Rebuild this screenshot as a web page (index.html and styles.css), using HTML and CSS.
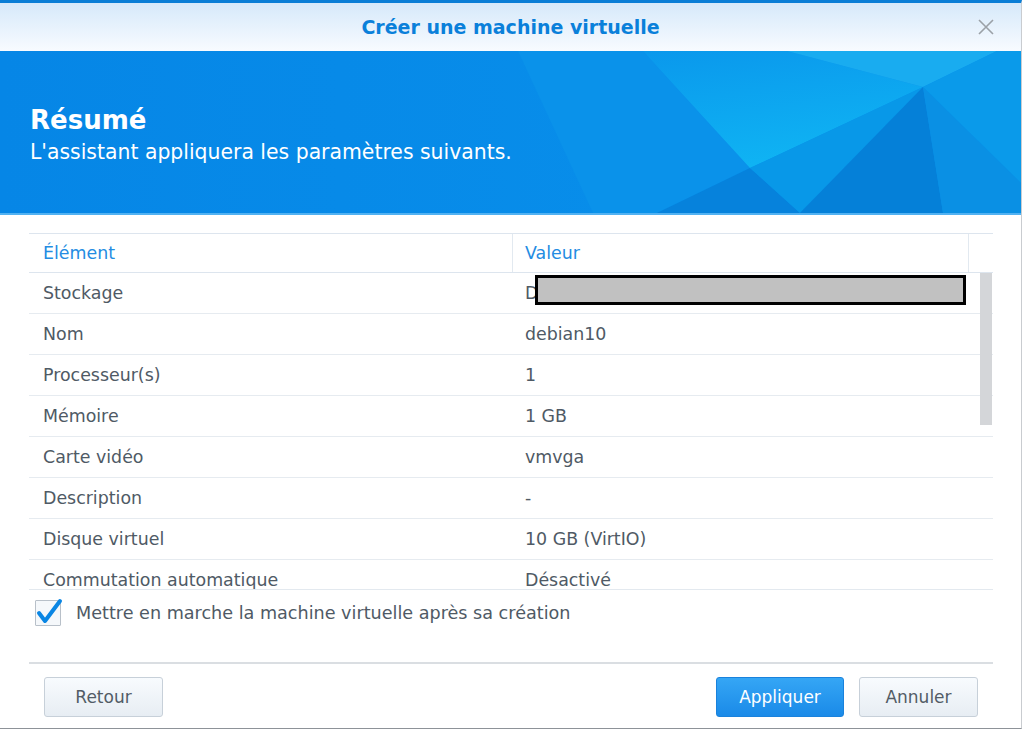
FILE: index.html
```html
<!DOCTYPE html>
<html>
<head>
    <title>Créer une machine virtuelle</title>
    <link rel="stylesheet" href="styles.css">
</head>
<body>
    <div class="dialog">
        <div class="titlebar">
            <span></span>
            <h1 class="title">Créer une machine virtuelle</h1>
            <svg class="close" width="18" height="18" viewBox="0 0 18 18">
                <path d="M2 2 L16 16 M16 2 L2 16" stroke="#9ba1a7" stroke-width="1.6" fill="none"/>
            </svg>
        </div>

        <div class="banner">
            <!-- decorative polygon background -->
            <svg class="banner-bg" viewBox="0 0 1021 162" preserveAspectRatio="none">
                <defs>
                    <linearGradient id="base" x1="0" y1="0" x2="1" y2="0">
                        <stop offset="0" stop-color="#0686e6"/>
                        <stop offset="1" stop-color="#0992ec"/>
                    </linearGradient>
                    <linearGradient id="mid" x1="0" y1="0" x2="0.3" y2="1">
                        <stop offset="0" stop-color="#0a98ec"/>
                        <stop offset="1" stop-color="#0fb3f3"/>
                    </linearGradient>
                </defs>
                <rect x="0" y="0" width="1021" height="162" fill="url(#base)"/>
                <polygon points="518,0 643,0 750,117 657,162 593,162" fill="#0a92ea"/>
                <polygon points="643,0 787,0 923,36 750,117" fill="url(#mid)"/>
                <polygon points="787,0 997,0 923,36" fill="#19acf0"/>
                <polygon points="923,36 997,0 1021,0 1021,132" fill="#0a9aea"/>
                <polygon points="657,162 750,117 800,162" fill="#0682dc"/>
                <polygon points="750,117 923,36 800,162" fill="#0898e8"/>
                <polygon points="923,36 800,162 943,162" fill="#0580d8"/>
                <polygon points="923,36 943,162 1021,162 1021,132" fill="#0a90e4"/>
            </svg>
            <div class="banner-text">
                <h2 class="step-title">Résumé</h2>
                <p class="step-desc">L'assistant appliquera les paramètres suivants.</p>
            </div>
        </div>

        <div class="content">
            <div class="grid">
                <div class="grid-head">
                    <div class="cell">Élément</div>
                    <div class="cell">Valeur</div>
                    <div class="cell"></div>
                </div>
                <div class="grid-body">
                    <div class="row"><div class="cell">Stockage</div><div class="cell value">D<span class="redacted"></span></div></div>
                    <div class="row"><div class="cell">Nom</div><div class="cell value">debian10</div></div>
                    <div class="row"><div class="cell">Processeur(s)</div><div class="cell value">1</div></div>
                    <div class="row"><div class="cell">Mémoire</div><div class="cell value">1 GB</div></div>
                    <div class="row"><div class="cell">Carte vidéo</div><div class="cell value">vmvga</div></div>
                    <div class="row"><div class="cell">Description</div><div class="cell value">-</div></div>
                    <div class="row"><div class="cell">Disque virtuel</div><div class="cell value">10 GB (VirtIO)</div></div>
                    <div class="row"><div class="cell">Commutation automatique</div><div class="cell value">Désactivé</div></div>
                    <div class="scrollbar"></div>
                </div>
            </div>

            <label class="check-row">
                <span class="checkbox">
                    <svg width="30" height="30" viewBox="0 0 30 30">
                        <path d="M6 15 L12 23 L27 3" stroke="#0a86e4" stroke-width="4" fill="none" stroke-linecap="round" stroke-linejoin="round"/>
                    </svg>
                </span>
                Mettre en marche la machine virtuelle après sa création
            </label>
        </div>

        <div class="footer">
            <button class="btn">Retour</button>
            <div class="footer-right">
                <button class="btn btn-primary">Appliquer</button>
                <button class="btn">Annuler</button>
            </div>
        </div>
    </div>
</body>
</html>
```

FILE: styles.css
```css
body {
    margin: 0;
    background-color: #ffffff;
    font-family: "DejaVu Sans", Verdana, sans-serif;
    color: #4f5a65;
}
.dialog {
    width: 1021px;
    height: 725px;
    border-top: 3px solid #0a7ed6;
    border-right: 1px solid #c9ccd0;
    border-bottom: 1px solid #8d9298;
    display: flex;
    flex-direction: column;
    background-color: #ffffff;
}
.titlebar {
    height: 48px;
    display: grid;
    grid-template-columns: 1fr auto 1fr;
    align-items: center;
    background: linear-gradient(#d6e9fa, #f8fbff);
    padding: 0 26px;
}
.title {
    margin: 0;
    font-size: 19px;
    font-weight: bold;
    color: #0a80da;
}
.close {
    justify-self: end;
}
/* blue header with polygons */
.banner {
    position: relative;
    height: 162px;
    border-bottom: 2px solid #52b2f2;
    overflow: hidden;
}
.banner-bg {
    position: absolute;
    left: 0;
    top: 0;
    width: 100%;
    height: 100%;
}
.banner-text {
    position: relative;
    padding: 54px 0 0 30px;
    color: #ffffff;
}
.step-title {
    margin: 0;
    font-size: 26px;
    line-height: 30px;
    font-weight: bold;
}
.step-desc {
    margin: 0;
    font-size: 20.4px;
    line-height: 34px;
}
.content {
    flex: 1;
    padding: 18px 28px 0 29px;
}
.grid {
    font-size: 17.4px;
}
.grid-head,
.row {
    display: grid;
    grid-template-columns: 483px 456px 1fr;
}
.grid-head {
    height: 38px;
    border-top: 1px solid #dde5ee;
    border-bottom: 1px solid #dde5ee;
    color: #248ce2;
}
.grid-head .cell + .cell {
    border-left: 1px solid #e2e9f0;
}
.cell {
    display: flex;
    align-items: center;
    padding-left: 14px;
}
.grid-head .cell + .cell {
    padding-left: 12px;
}
.grid-body {
    position: relative;
    height: 316px;
    overflow: hidden;
    border-bottom: 1px solid #e3e9ef;
}
.row {
    height: 40px;
    border-bottom: 1px solid #e6ebf0;
}
.value {
    position: relative;
    padding-left: 13px;
}
.redacted {
    position: absolute;
    left: 23px;
    top: 2px;
    width: 425px;
    height: 24px;
    border: 3px solid #000000;
    background-color: #c1c1c1;
}
.scrollbar {
    position: absolute;
    right: 1px;
    top: 0;
    width: 12px;
    height: 152px;
    background-color: #d4d6d9;
}
.check-row {
    display: flex;
    align-items: flex-start;
    gap: 15px;
    padding: 10px 0 0 6px;
    font-size: 17.6px;
    line-height: 26px;
}
.checkbox {
    position: relative;
    width: 24px;
    height: 24px;
    border: 1px solid #b8c0c9;
    background-color: #f5f8fb;
    border-radius: 1px;
    flex-shrink: 0;
}
.checkbox svg {
    position: absolute;
    left: -3px;
    top: -3px;
}
.footer {
    box-sizing: border-box;
    height: 66px;
    margin: 0 28px 0 29px;
    border-top: 2px solid #dadee2;
    padding: 13px 15px 0 15px;
    display: flex;
    justify-content: space-between;
    align-items: flex-start;
}
.footer-right {
    display: flex;
    gap: 15px;
}
.btn {
    height: 40px;
    width: 119px;
    border: 1px solid #c7d0d9;
    border-radius: 3px;
    background: linear-gradient(#f8fbfe, #e7edf3);
    color: #525c66;
    font-family: "DejaVu Sans", Verdana, sans-serif;
    font-size: 17px;
    cursor: pointer;
}
.btn-primary {
    width: 128px;
    border-color: #1a82dc;
    background: linear-gradient(#35a6f5, #1a8ae8);
    color: #ffffff;
}
```
